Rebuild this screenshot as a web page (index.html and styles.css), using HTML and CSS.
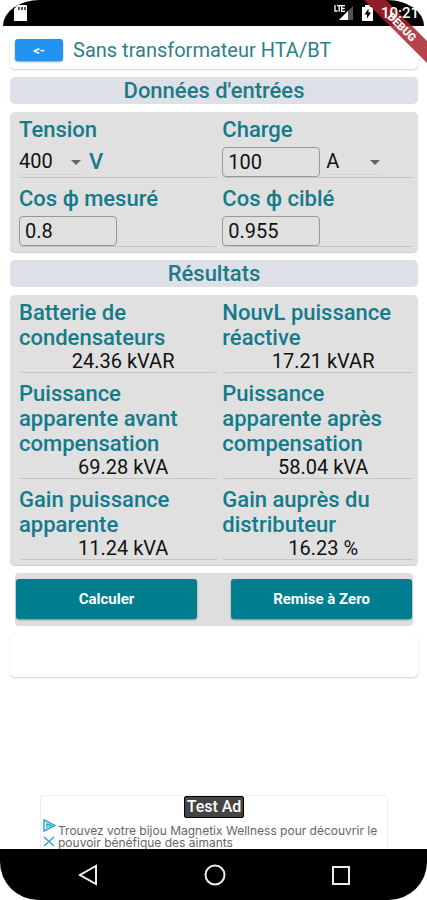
FILE: index.html
```html
<!DOCTYPE html>
<html lang="fr">

<head>
  <meta charset="UTF-8">
  <meta name="viewport" content="width=device-width, initial-scale=1.0">
  <title>Sans transformateur HTA/BT</title>

  <link rel="stylesheet" href="styles.css">
</head>

<body>
  <div id="screen">
    <div class="statusBar">
      <svg class="sdCard" width="13" height="16" viewBox="0 0 13 16">
        <path fill="#fff" d="M4 0h8l1 1v15H0V4z" />
        <path stroke="#555" stroke-width="2" d="M5 2v3M8 2v3M11 2v3" />
      </svg>
      <div class="statusIcons">
        <svg width="20" height="16" viewBox="0 0 20 16">
          <path fill="#555" d="M19 1v14H5z" />
          <path fill="#fff" d="M14 6v9H5z" />
          <path fill="none" stroke="#fff" stroke-width="1.3" d="M1 0v6h2.500M3 .7h4M5.200.7v6M11 .7H7.700v5.600H11M7.700 3.500h3" />
        </svg>
        <svg width="11" height="16" viewBox="0 0 11 16">
          <path fill="#fff" d="M3 2V0h5v2h3v14H0V2z" />
          <path fill="#000" d="M6.500 3.500 2.500 9.500H5v4l4-6H6.500z" />
        </svg>
        <span class="clock">10:21</span>
      </div>
    </div>

    <svg class="debugBanner" width="63" height="63" viewBox="0 0 63 63">
      <path fill="#a9252b" fill-opacity=".85" d="M0 0h22l41 41v22z" />
      <text x="38" y="31" transform="rotate(45 38 27)" text-anchor="middle">DEBUG</text>
    </svg>

    <div id="content">
      <div class="header">
        <button class="backButton" type="button" aria-label="Retour">&lt;-</button>
        <h1>Sans transformateur HTA/BT</h1>
      </div>

      <h2>Données d'entrées</h2>

      <form id="inputs">
        <div class="panel">
          <div class="cell">
            <label for="tension">Tension</label>
            <div class="controls">
              <span class="dropDown">
                <select id="tension">
                  <option>400</option>
                  <option>230</option>
                </select>
              </span>
              <span class="unit">V</span>
            </div>
          </div>
          <div class="cell">
            <label for="charge">Charge</label>
            <div class="controls">
              <input id="charge" type="text" value="100">
              <span class="dropDown chargeUnit">
                <select aria-label="Unité de charge">
                  <option>A</option>
                  <option>kW</option>
                </select>
              </span>
            </div>
          </div>
          <div class="cell">
            <label for="cosMesure">Cos ф mesuré</label>
            <div class="controls">
              <input id="cosMesure" type="text" value="0.8">
            </div>
          </div>
          <div class="cell">
            <label for="cosCible">Cos ф ciblé</label>
            <div class="controls">
              <input id="cosCible" type="text" value="0.955">
            </div>
          </div>
        </div>
      </form>

      <h2>Résultats</h2>

      <div class="panel">
        <div class="cell">
          <h3>Batterie de condensateurs</h3>
          <p class="value">24.36 kVAR</p>
        </div>
        <div class="cell">
          <h3>NouvL puissance réactive</h3>
          <p class="value">17.21 kVAR</p>
        </div>
        <div class="cell">
          <h3>Puissance apparente avant compensation</h3>
          <p class="value">69.28 kVA</p>
        </div>
        <div class="cell">
          <h3>Puissance apparente après compensation</h3>
          <p class="value">58.04 kVA</p>
        </div>
        <div class="cell">
          <h3>Gain puissance apparente</h3>
          <p class="value">11.24 kVA</p>
        </div>
        <div class="cell">
          <h3>Gain auprès du distributeur</h3>
          <p class="value">16.23 %</p>
        </div>
      </div>

      <div class="actions">
        <button type="submit" form="inputs">Calculer</button>
        <button type="reset" form="inputs">Remise à Zero</button>
      </div>

      <div class="emptyCard"></div>
    </div>

    <div class="ad">
      <span class="adBadge">Test Ad</span>
      <div class="adBody">
        <svg width="14" height="30" viewBox="0 0 14 30" fill="none" stroke="#2ba6cb" stroke-width="1.400">
          <path d="M2 2v11l11-5.500z" />
          <path d="M5 10V6l4 1.500L6.500 9" />
          <path d="M2 19l10 9M12 19 2 28" />
        </svg>
        <p>Trouvez votre bijou Magnetix Wellness pour découvrir le pouvoir bénéfique des aimants</p>
      </div>
    </div>

    <div class="navBar">
      <button type="button" aria-label="Précédent">
        <svg width="22" height="22" viewBox="0 0 22 22"><path d="M19 2v18L3 11z" /></svg>
      </button>
      <button type="button" aria-label="Accueil">
        <svg width="22" height="22" viewBox="0 0 22 22"><circle cx="11" cy="11" r="9.500" /></svg>
      </button>
      <button type="button" aria-label="Applications récentes">
        <svg width="22" height="22" viewBox="0 0 22 22"><path d="M3 3h16v17H3z" /></svg>
      </button>
    </div>
  </div>
</body>

</html>
```
FILE: styles.css
```css
* {
  box-sizing: border-box;
}

body {
  margin: 0px;
  background-color: white;
  font-family: Roboto, "Liberation Sans", sans-serif;
}

h1,
h2,
h3,
p {
  margin: 0px;
}

#screen {
  position: relative;
  display: flex;
  flex-direction: column;
  min-height: 100vh;
  overflow: hidden;
}

.statusBar {
  display: flex;
  justify-content: space-between;
  align-items: center;
  height: 26px;
  margin: 0px 3px;
  padding: 0px 5px 0px 11px;
  border-radius: 38px 38px 0px 0px / 27px 27px 0px 0px;
  background-color: black;
}

.statusIcons {
  display: flex;
  align-items: center;
  gap: 8px;
}

.clock {
  position: relative;
  z-index: 1;
  color: white;
  font-size: 15px;
  font-weight: 500;
}

.debugBanner {
  position: absolute;
  top: 0px;
  right: 0px;
}

.debugBanner text {
  fill: white;
  font-size: 11px;
  font-weight: 900;
}

#content {
  display: flex;
  flex-direction: column;
  gap: 8px;
  padding: 8px 9px 0px 10px;
}

.header {
  display: flex;
  align-items: center;
  gap: 10px;
  height: 35px;
  padding: 0px 5px 3px;
  border-radius: 5px;
  box-shadow: 0px 1px 2px #ccc;
}

.backButton {
  width: 48px;
  height: 22px;
  padding: 0px;
  border: none;
  border-radius: 3px;
  background-color: #2094f0;
  box-shadow: 0px 1px 2px #999;
  color: white;
  font-family: inherit;
  font-size: 13px;
  font-weight: 700;
}

h1 {
  color: #2d7f8b;
  font-size: 20px;
  font-weight: 400;
  line-height: 24px;
}

h2 {
  border-radius: 5px;
  background-color: #dde0e6;
  color: #1f7a87;
  font-size: 22px;
  font-weight: 500;
  line-height: 27px;
  text-align: center;
}

.panel {
  display: grid;
  grid-template-columns: 30fr 29fr;
  gap: 8px 5px;
  padding: 5px 4px 5px 9px;
  border-radius: 5px;
  background-color: #e0e0e0;
  box-shadow: 0px 1px 1px #ccc;
}

.cell {
  border-bottom: 1px solid #c4c4c4;
  border-radius: 3px;
}

.cell label,
h3,
.unit {
  display: block;
  color: #147b8a;
  font-size: 22px;
  font-weight: 500;
  line-height: 25px;
}

.controls {
  display: flex;
  align-items: center;
  gap: 6px;
  height: 35px;
  padding-top: 4px;
}

.controls input {
  width: 98px;
  height: 30px;
  padding: 0px 5px;
  border: 1px solid #999;
  border-radius: 4px;
  background-color: transparent;
  color: #111;
  font-family: inherit;
  font-size: 20px;
}

.dropDown {
  position: relative;
  width: 64px;
}

.chargeUnit {
  width: 56px;
}

.dropDown select {
  width: 100%;
  height: 26px;
  padding: 0px;
  border: none;
  border-bottom: 1px solid #d4d4d4;
  background-color: transparent;
  color: #111;
  font-family: inherit;
  font-size: 20px;
  appearance: none;
}

.dropDown::after {
  content: "";
  position: absolute;
  top: 11px;
  right: 2px;
  border: 5px solid transparent;
  border-top-color: #666;
  border-bottom: none;
  pointer-events: none;
}

.value {
  padding-left: 10px;
  color: #111;
  font-size: 20px;
  line-height: 22px;
  text-align: center;
}

.actions {
  display: flex;
  gap: 34px;
  margin: 0px 5px;
  padding: 6px 1px 7px;
  border-radius: 4px;
  background-color: #dedede;
}

.actions button {
  flex: 1;
  height: 40px;
  border: none;
  border-radius: 3px;
  background-color: #007d8f;
  box-shadow: 0px 1px 2px #888;
  color: white;
  font-family: inherit;
  font-size: 15px;
  font-weight: 700;
}

.emptyCard {
  height: 43px;
  border-radius: 5px;
  box-shadow: 0px 1px 2px #ccc;
}

.ad {
  display: flex;
  flex-direction: column;
  align-items: center;
  margin: auto 39px 0px 40px;
  border: 1px solid #eee;
  border-bottom: none;
  border-radius: 4px 4px 0px 0px;
}

.adBadge {
  padding: 0px 2px;
  border: 1px solid black;
  border-radius: 2px;
  background-color: #444;
  color: white;
  font-size: 16px;
  font-weight: 500;
  line-height: 20px;
}

.adBody {
  display: flex;
  gap: 2px;
  align-self: stretch;
  padding-left: 1px;
}

.adBody svg {
  flex-shrink: 0;
}

.adBody p {
  padding-top: 7px;
  color: #666;
  font-family: Inter, sans-serif;
  font-size: 12px;
  line-height: 12px;
}

.navBar {
  display: flex;
  justify-content: space-between;
  align-items: center;
  height: 51px;
  padding: 0px 75px 0px 77px;
  border-radius: 0px 0px 38px 38px;
  background-color: black;
}

.navBar button {
  display: flex;
  padding: 0px;
  border: none;
  background-color: transparent;
}

.navBar path,
.navBar circle {
  fill: none;
  stroke: #eee;
  stroke-width: 2;
}
```
